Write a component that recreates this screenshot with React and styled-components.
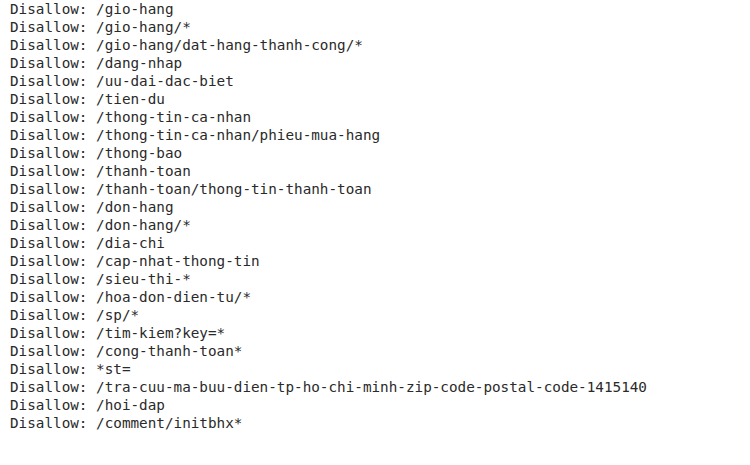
import React from 'react'
import styled, { createGlobalStyle } from 'styled-components'

const GlobalStyle = createGlobalStyle`
  html, body {
    margin: 0;
    padding: 0;
    background: #ffffff;
  }
`

const Page = styled.div`
  width: 750px;
  height: 465px;
  padding: 0 0 0 10px;
  box-sizing: border-box;
  overflow: hidden;
  background: #ffffff;
`

const Rules = styled.pre`
  margin: 0;
  font-family: "DejaVu Sans Mono", "Liberation Mono", monospace;
  font-size: 14.3px;
  line-height: 18px;
  color: #2a2a2a;
  white-space: pre;
`

const paths = [
  '/gio-hang',
  '/gio-hang/*',
  '/gio-hang/dat-hang-thanh-cong/*',
  '/dang-nhap',
  '/uu-dai-dac-biet',
  '/tien-du',
  '/thong-tin-ca-nhan',
  '/thong-tin-ca-nhan/phieu-mua-hang',
  '/thong-bao',
  '/thanh-toan',
  '/thanh-toan/thong-tin-thanh-toan',
  '/don-hang',
  '/don-hang/*',
  '/dia-chi',
  '/cap-nhat-thong-tin',
  '/sieu-thi-*',
  '/hoa-don-dien-tu/*',
  '/sp/*',
  '/tim-kiem?key=*',
  '/cong-thanh-toan*',
  '*st=',
  '/tra-cuu-ma-buu-dien-tp-ho-chi-minh-zip-code-postal-code-1415140',
  '/hoi-dap',
  '/comment/initbhx*',
]

export default function App() {
  return (
    <>
      <GlobalStyle />
      <Page>
        <Rules>{paths.map((p) => `Disallow: ${p}`).join('\n')}</Rules>
      </Page>
    </>
  )
}
